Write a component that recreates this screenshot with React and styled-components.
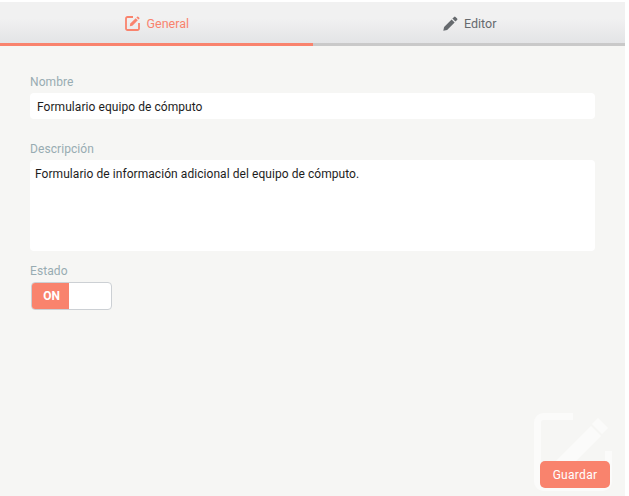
import React from 'react';
import styled, { createGlobalStyle } from 'styled-components';

const GlobalStyle = createGlobalStyle`
  html, body {
    margin: 0;
    background: #fff;
  }
`;

const Page = styled.div`
  box-sizing: border-box;
  width: 625px;
  height: 494px;
  margin-top: 2px;
  background: #f6f6f4;
  font-family: Roboto, sans-serif;
  display: flex;
  flex-direction: column;
  position: relative;
  overflow: hidden;
`;

const Tabs = styled.div`
  display: flex;
  height: 44px;
  flex: none;
`;

const Tab = styled.div`
  box-sizing: border-box;
  flex: 1;
  display: flex;
  align-items: center;
  justify-content: center;
  gap: 6px;
  padding: 1px 0 0 2px;
  font-size: 12.5px;
  color: ${(p) => (p.$active ? '#f9836d' : '#666a6e')};
  background: linear-gradient(#f1f1f1 0%, #f1f1f1 40%, #e3e4e6 100%);
  border-bottom: 3px solid ${(p) => (p.$active ? '#f9836d' : '#c9c9c9')};
`;

const Form = styled.div`
  display: flex;
  flex-direction: column;
  padding: 29px 30px 0;
`;

const Label = styled.label`
  font-size: 12px;
  line-height: 14px;
  letter-spacing: 0.08px;
  color: #98acb2;
  margin-bottom: 4px;
`;

const TextField = styled.div`
  box-sizing: border-box;
  height: 26px;
  line-height: 28px;
  padding-left: 7px;
  margin-bottom: 23px;
  background: #fff;
  border-radius: 4px;
  font-size: 12px;
  letter-spacing: 0.06px;
  color: #1d1d1d;
`;

const TextArea = styled.div`
  box-sizing: border-box;
  height: 91px;
  padding: 7px 5px;
  margin-bottom: 13px;
  background: #fff;
  border-radius: 4px;
  font-size: 12px;
  line-height: 14px;
  letter-spacing: 0.06px;
  color: #1d1d1d;
`;

const Switch = styled.div`
  box-sizing: border-box;
  width: 81px;
  height: 28px;
  margin-left: 1px;
  display: flex;
  background: #fff;
  border: 1px solid #ccd0d4;
  border-radius: 4px;
  overflow: hidden;
`;

const SwitchOn = styled.span`
  box-sizing: border-box;
  width: 37px;
  padding-left: 2px;
  display: flex;
  align-items: center;
  justify-content: center;
  background: #f9836d;
  color: #fff;
  font-size: 12px;
  font-weight: 700;
`;

const Watermark = styled.svg`
  position: absolute;
  left: 534px;
  top: 411px;
`;

const SaveButton = styled.button`
  position: absolute;
  left: 540px;
  top: 459px;
  width: 70px;
  height: 27px;
  border: 0;
  border-radius: 5px;
  background: #f9836d;
  color: #fff;
  font-family: Roboto, sans-serif;
  font-size: 12px;
  letter-spacing: 0.3px;
`;

const EditIcon = () => (
  <svg width="15" height="15" viewBox="0 0 15 15" fill="none">
    <path d="M8 1H2.500A1.500 1.500 0 0 0 1 2.500v10A1.500 1.500 0 0 0 2.500 14h10a1.500 1.500 0 0 0 1.500-1.500V7" stroke="#f9836d" strokeWidth="1.800" />
    <path d="M4.800 10.200l.5-2.600 5.400-5.400 2.100 2.100-5.400 5.400z" fill="#f9836d" />
    <path d="M11.400 1.500l.8-.8a.7.7 0 0 1 1 0l1.100 1.100a.7.7 0 0 1 0 1l-.8.8z" fill="#f9836d" />
  </svg>
);

const PencilIcon = () => (
  <svg width="15" height="15" viewBox="0 0 15 15">
    <path d="M0.300 14.700l.8-3.800 7.500-7.500 3 3-7.500 7.500z" fill="#666a6e" />
    <path d="M9.400 2.600l1.700-1.700a1 1 0 0 1 1.400 0l1.600 1.600a1 1 0 0 1 0 1.400l-1.700 1.700z" fill="#666a6e" />
  </svg>
);

export default function App() {
  return (
    <Page>
      <GlobalStyle />
      <Tabs>
        <Tab $active><EditIcon />General</Tab>
        <Tab><PencilIcon />Editor</Tab>
      </Tabs>
      <Form>
        <Label>Nombre</Label>
        <TextField>Formulario equipo de cómputo</TextField>
        <Label>Descripción</Label>
        <TextArea>Formulario de información adicional del equipo de cómputo.</TextArea>
        <Label>Estado</Label>
        <Switch>
          <SwitchOn>ON</SwitchOn>
        </Switch>
      </Form>
      <Watermark width="78" height="78" viewBox="0 0 78 78" fill="none">
        <path d="M39 3.500H9.500a6 6 0 0 0-6 6v59a6 6 0 0 0 6 6h59a6 6 0 0 0 6-6V38" stroke="#fbfbfa" strokeWidth="7" />
        <path d="M57 13l10 10-36 36-13 3 3-13z" fill="#fbfbfa" />
        <path d="M64 5l10 10-6 6-10-10z" fill="#fbfbfa" />
      </Watermark>
      <SaveButton>Guardar</SaveButton>
    </Page>
  );
}
